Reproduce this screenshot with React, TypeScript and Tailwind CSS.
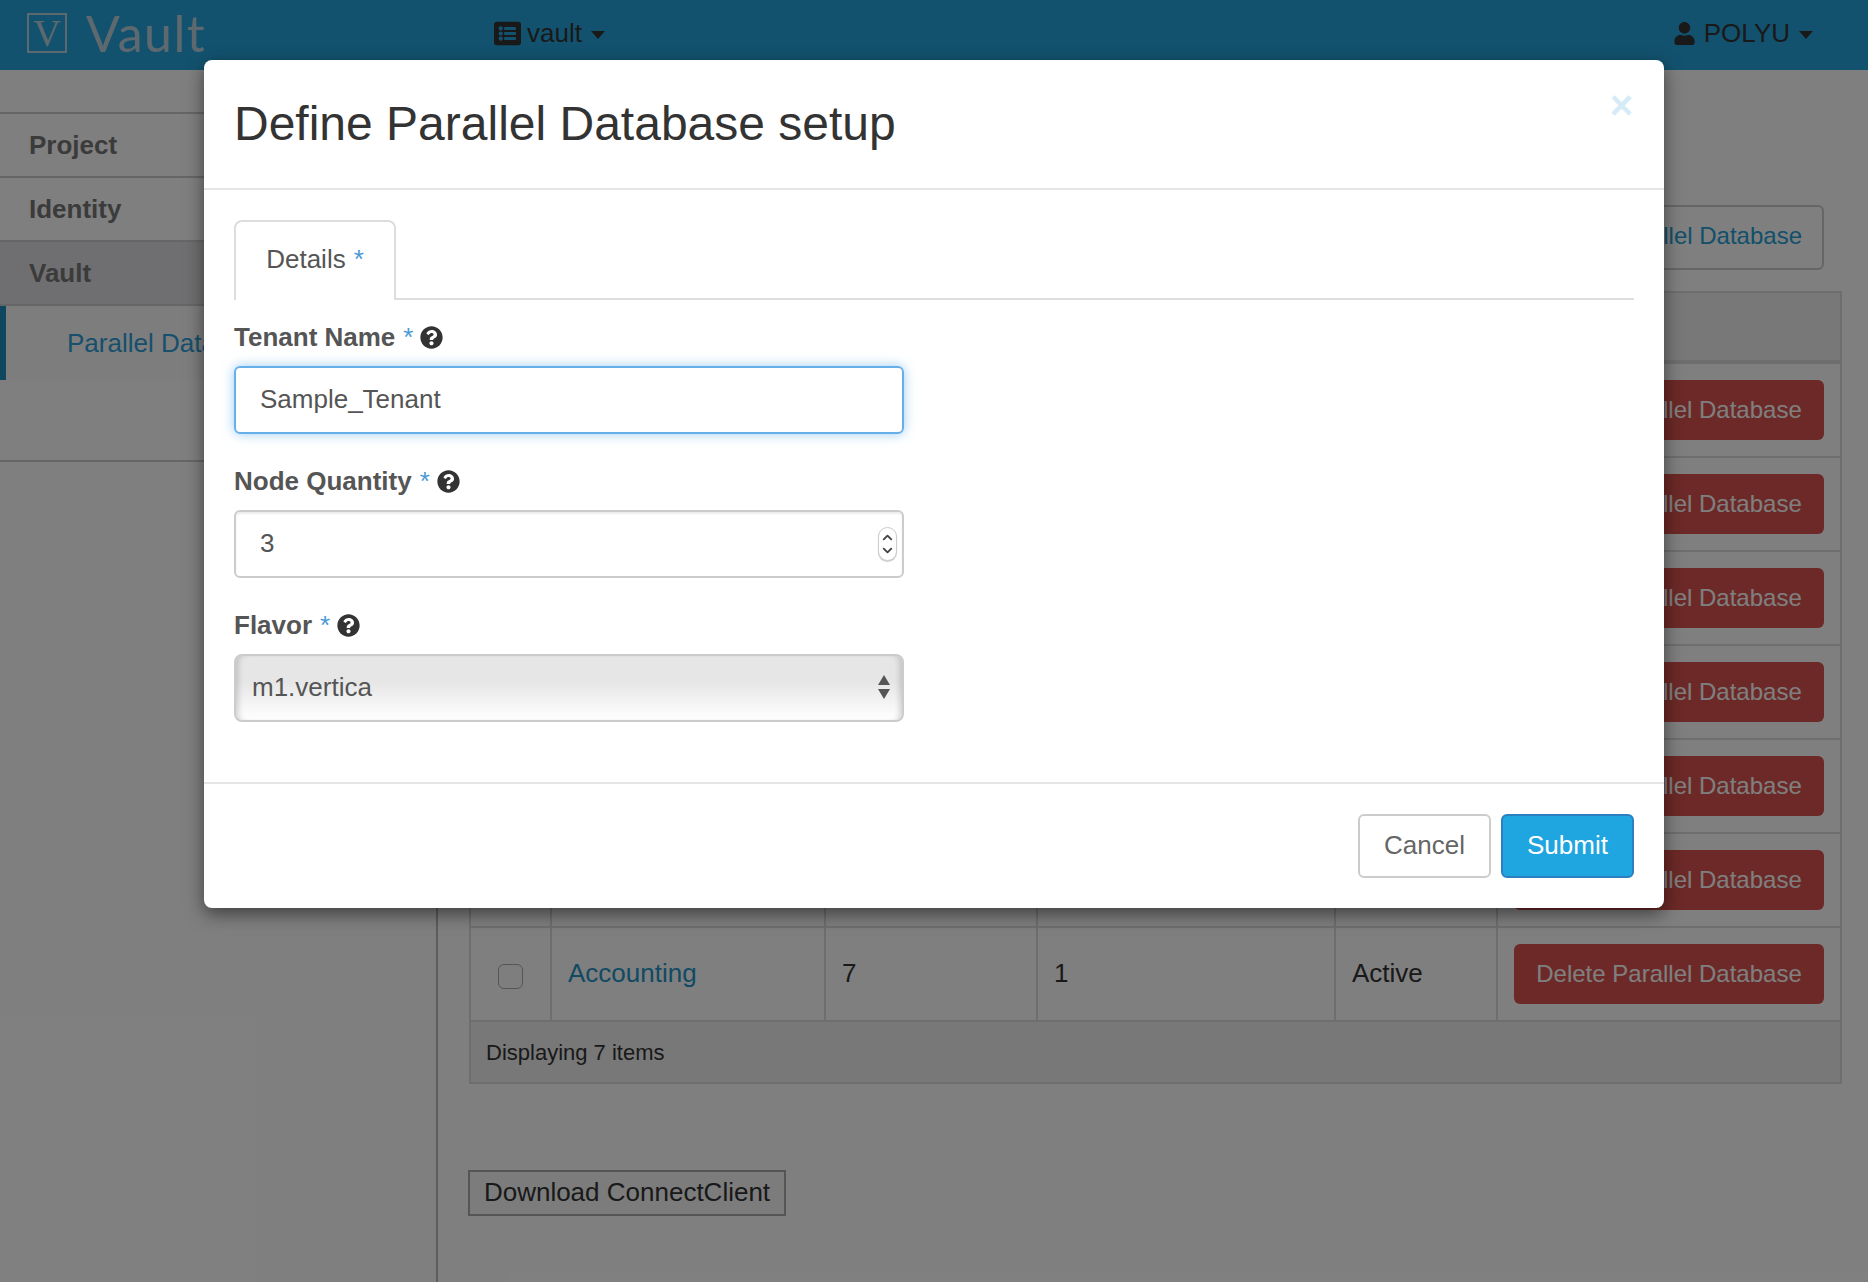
import { ChevronDown, ChevronUp } from "lucide-react";
import { FaListAlt, FaQuestionCircle, FaUser } from "react-icons/fa";

const rows = [
  { id: 1 },
  { id: 2 },
  { id: 3 },
  { id: 4 },
  { id: 5 },
  { id: 6 },
  { id: 7, name: "Accounting", nodes: "7", flavor: "1", status: "Active" },
];

function Caret() {
  return <span className="ml-[9px] mt-[3px] h-0 w-0 border-x-[7px] border-t-[8px] border-x-transparent border-t-[#333]" />;
}

function FieldLabel({ children }: { children: string }) {
  return (
    <label className="mb-[11px] flex h-[36px] items-center text-[26px] font-bold text-[#555]">
      {children}
      <span className="ml-[8px] font-normal text-[#4a9ad4]">*</span>
      <FaQuestionCircle className="ml-[7px] text-[23px] text-[#333]" />
    </label>
  );
}

function SideItem({ label, active }: { label: string; active?: boolean }) {
  return (
    <div className={`flex h-[64px] items-center border-b-2 border-[#ccc] pl-[29px] text-[26px] font-bold text-[#777] ${active ? "bg-[#dfdfe2]" : ""}`}>
      {label}
    </div>
  );
}

export default function App() {
  return (
    <div className="relative h-[1282px] w-[1868px] overflow-hidden bg-white font-['Liberation_Sans',sans-serif] text-[#333]">
      <header className="flex h-[70px] items-center bg-[#25a5dd] pb-[4px] text-[26px]">
        <div className="flex w-[494px] items-center pl-[27px] text-[#bcd3de]">
          <span className="flex h-[40px] w-[40px] items-center justify-center border-2 border-[#bcd3de] font-['Liberation_Serif',serif] text-[38px] leading-none">
            V
          </span>
          <span className="ml-[19px] font-['Lato',sans-serif] text-[50px] font-normal leading-none tracking-[1.5px]">Vault</span>
        </div>
        <div className="flex items-center">
          <FaListAlt className="mr-[6px] text-[27px]" />
          vault
          <Caret />
        </div>
        <div className="ml-auto flex items-center pr-[55px]">
          <FaUser className="mr-[8px] text-[23px]" />
          POLYU
          <Caret />
        </div>
      </header>

      <div className="flex h-[1212px]">
        <aside className="w-[438px] shrink-0 border-r-2 border-[#bbb] pt-[42px]">
          <div className="h-[350px] border-y-2 border-[#ccc]">
            <SideItem label="Project" />
            <SideItem label="Identity" />
            <SideItem label="Vault" active />
            <div className="flex h-[74px] items-center border-l-[6px] border-[#1f8fbe] bg-[#fafafa] pl-[61px] text-[26px] text-[#2ca0d8]">
              Parallel Database
            </div>
          </div>
        </aside>

        <main className="w-[1430px] pl-[31px] pt-[135px]">
          <div className="flex w-[1373px] justify-end pr-[18px]">
            <button className="h-[65px] rounded-[6px] border-2 border-[#ccc] px-[20px] pb-[3px] text-[24px] text-[#25a0d6]">
              Launch Parallel Database
            </button>
          </div>

          <div className="mt-[21px] w-[1373px] border-2 border-[#ddd] text-[26px]">
            <div className="h-[71px] border-b-4 border-[#ddd] bg-[#f1f1f1]" />
            {rows.map((row) => (
              <div key={row.id} className="grid h-[94px] grid-cols-[81px_274px_212px_298px_162px_1fr] border-b-2 border-[#ddd] last:border-b-4">
                <div className="flex items-center justify-center border-r-2 border-[#ddd]">
                  <input type="checkbox" className="mt-[4px] h-[25px] w-[25px] appearance-none rounded-[6px] border border-[#aaa] bg-[#fdfdfd]" />
                </div>
                <div className="flex items-center border-r-2 border-[#ddd] pb-[2px] pl-[16px] text-[#2495c8]">{row.name}</div>
                <div className="flex items-center border-r-2 border-[#ddd] pb-[2px] pl-[16px]">{row.nodes}</div>
                <div className="flex items-center border-r-2 border-[#ddd] pb-[2px] pl-[16px]">{row.flavor}</div>
                <div className="flex items-center border-r-2 border-[#ddd] pb-[2px] pl-[16px]">{row.status}</div>
                <div className="flex items-center justify-end pr-[16px]">
                  <button className="h-[60px] w-[310px] rounded-[6px] bg-[#d9534f] pb-[1px] text-[24px] text-white">Delete Parallel Database</button>
                </div>
              </div>
            ))}
            <div className="flex h-[60px] items-center bg-[#f1f1f1] pl-[15px] text-[22px]">Displaying 7 items</div>
          </div>

          <button className="-ml-[1px] mt-[86px] h-[46px] w-[318px] border-2 border-[#aaa] bg-[#f8f8f8] pb-[2px] text-[26px] text-[#333]">
            Download ConnectClient
          </button>
        </main>
      </div>

      <div className="absolute inset-0 bg-black/50" />

      <div className="absolute left-[204px] top-[60px] flex h-[848px] w-[1460px] flex-col rounded-[8px] bg-white shadow-[0_6px_18px_rgba(0,0,0,0.5)]">
        <div className="flex h-[130px] shrink-0 items-start justify-between border-b-2 border-[#e5e5e5] pl-[30px] pr-[31px]">
          <h1 className="mt-[35px] text-[48px] leading-[58px] text-[#333]">Define Parallel Database setup</h1>
          <span className="mt-[20px] text-[40px] font-bold leading-[50px] text-[#d5ecf7]">×</span>
        </div>

        <div className="flex-1 px-[30px] pt-[30px]">
          <div className="mb-[19px] h-[80px] border-b-2 border-[#ddd]">
            <div className="flex h-[80px] w-[162px] items-center justify-center rounded-t-[8px] border-2 border-b-0 border-[#ddd] bg-white pb-[3px] text-[26px] text-[#555]">
              Details<span className="ml-[8px] text-[#4a9ad4]">*</span>
            </div>
          </div>

          <div className="mb-[29px] w-[670px]">
            <FieldLabel>Tenant Name</FieldLabel>
            <input
              defaultValue="Sample_Tenant"
              className="h-[68px] w-full rounded-[6px] border-2 border-[#66afe9] px-[24px] pb-[2px] text-[26px] text-[#555] shadow-[0_0_12px_rgba(102,175,233,0.65)] outline-none"
            />
          </div>

          <div className="mb-[29px] w-[670px]">
            <FieldLabel>Node Quantity</FieldLabel>
            <div className="relative">
              <input
                defaultValue="3"
                className="h-[68px] w-full rounded-[6px] border-2 border-[#ccc] px-[24px] pb-[2px] text-[26px] text-[#555] shadow-[inset_0_2px_2px_rgba(0,0,0,0.08)] outline-none"
              />
              <div className="absolute right-[7px] top-[17px] flex h-[34px] w-[19px] flex-col items-center justify-center rounded-full border border-[#ccc] bg-white text-[#444] shadow-[0_1px_1px_rgba(0,0,0,0.2)]">
                <ChevronUp size={15} strokeWidth={3} className="-mb-[1px]" />
                <ChevronDown size={15} strokeWidth={3} className="-mt-[1px]" />
              </div>
            </div>
          </div>

          <div className="w-[670px]">
            <FieldLabel>Flavor</FieldLabel>
            <div className="relative">
              <select className="h-[68px] w-full appearance-none rounded-[8px] border-2 border-[#ccc] bg-gradient-to-b from-[#e6e6e6] from-40% to-white px-[16px] pb-[2px] text-[26px] text-[#555] shadow-[inset_6px_0_6px_-4px_rgba(0,0,0,0.18),inset_-6px_0_6px_-4px_rgba(0,0,0,0.18)] outline-none">
                <option>m1.vertica</option>
              </select>
              <svg viewBox="0 0 14 24" className="pointer-events-none absolute right-[13px] top-[21px] h-[24px] w-[14px]" fill="#555">
                <path d="M7 0l6 10H1zM7 24L1 14h12z" />
              </svg>
            </div>
          </div>
        </div>

        <div className="flex h-[126px] shrink-0 items-start justify-end gap-[10px] border-t-2 border-[#e5e5e5] px-[30px] pt-[30px] text-[26px]">
          <button className="h-[64px] w-[133px] rounded-[6px] border-2 border-[#ccc] bg-white pb-[2px] text-[#666]">Cancel</button>
          <button className="h-[64px] w-[133px] rounded-[6px] border-2 border-[#2d80bf] bg-[#1fa5e0] pb-[2px] text-white">Submit</button>
        </div>
      </div>
    </div>
  );
}
